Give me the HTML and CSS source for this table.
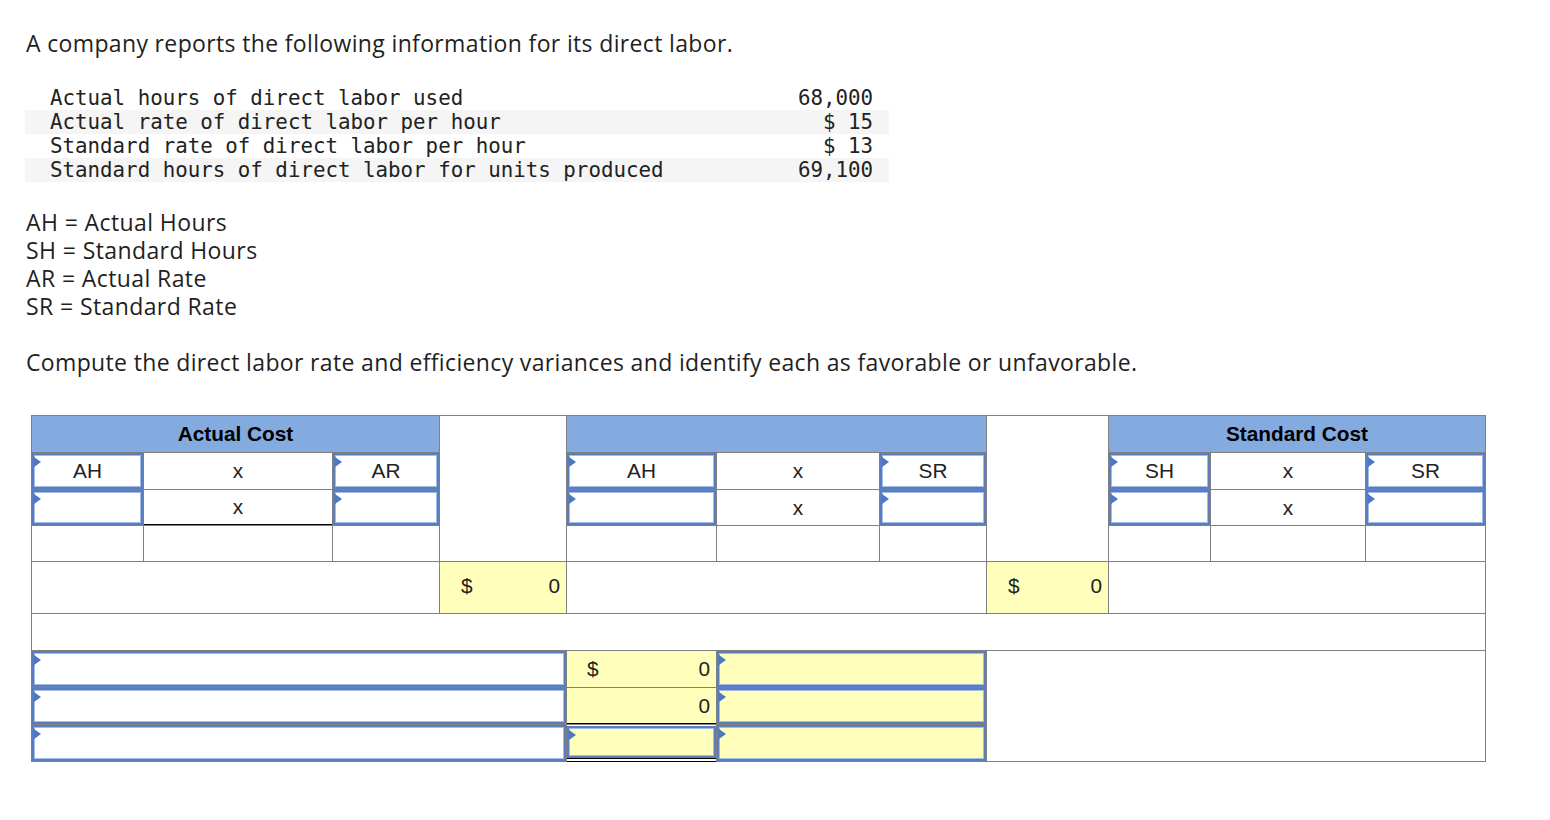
FILE: index.html
```html
<!DOCTYPE html>
<html>
<head>
<meta charset="utf-8">
<link rel="stylesheet" href="styles.css">
</head>
<body>
<div class="page">
  <p class="intro">A company reports the following information for its direct labor.</p>
  <table class="data">
    <tr><td class="lbl">Actual hours of direct labor used</td><td class="val">68,000</td></tr>
    <tr class="alt"><td class="lbl">Actual rate of direct labor per hour</td><td class="val">$ 15</td></tr>
    <tr><td class="lbl">Standard rate of direct labor per hour</td><td class="val">$ 13</td></tr>
    <tr class="alt"><td class="lbl">Standard hours of direct labor for units produced</td><td class="val">69,100</td></tr>
  </table>
  <div class="defs">
    <div>AH = Actual Hours</div>
    <div>SH = Standard Hours</div>
    <div>AR = Actual Rate</div>
    <div>SR = Standard Rate</div>
  </div>
  <p class="task">Compute the direct labor rate and efficiency variances and identify each as favorable or unfavorable.</p>

  <div class="sheet">
    <!-- row 1 -->
    <div class="cell hdr c1-4 r1">Actual Cost</div>
    <div class="cell c4 r1-5"></div>
    <div class="cell hdr c5-8 r1"></div>
    <div class="cell c8 r1-5"></div>
    <div class="cell hdr c9-12 r1">Standard Cost</div>
    <!-- row 2 -->
    <div class="cell inp c1 r2"><span class="tri"></span>AH</div>
    <div class="cell txt c2 r2">x</div>
    <div class="cell inp c3 r2"><span class="tri"></span>AR</div>
    <div class="cell inp c5 r2"><span class="tri"></span>AH</div>
    <div class="cell txt c6 r2">x</div>
    <div class="cell inp c7 r2"><span class="tri"></span>SR</div>
    <div class="cell inp c9 r2"><span class="tri"></span>SH</div>
    <div class="cell txt c10 r2">x</div>
    <div class="cell inp c11 r2"><span class="tri"></span>SR</div>
    <!-- row 3 -->
    <div class="cell inp c1 r3"><span class="tri"></span></div>
    <div class="cell txt c2 r3 uline">x</div>
    <div class="cell inp c3 r3"><span class="tri"></span></div>
    <div class="cell inp c5 r3"><span class="tri"></span></div>
    <div class="cell txt c6 r3">x</div>
    <div class="cell inp c7 r3"><span class="tri"></span></div>
    <div class="cell inp c9 r3"><span class="tri"></span></div>
    <div class="cell txt c10 r3">x</div>
    <div class="cell inp c11 r3"><span class="tri"></span></div>
    <!-- row 4 -->
    <div class="cell c1 r4"></div>
    <div class="cell c2 r4"></div>
    <div class="cell c3 r4"></div>
    <div class="cell c5 r4"></div>
    <div class="cell c6 r4"></div>
    <div class="cell c7 r4"></div>
    <div class="cell c9 r4"></div>
    <div class="cell c10 r4"></div>
    <div class="cell c11 r4"></div>
    <!-- row 5 -->
    <div class="cell c1-4 r5"></div>
    <div class="cell money tall c4 r5"><span>$</span><span>0</span></div>
    <div class="cell c5-8 r5"></div>
    <div class="cell money tall c8 r5"><span>$</span><span>0</span></div>
    <div class="cell c9-12 r5"></div>
    <!-- row 6 -->
    <div class="cell c1-12 r6"></div>
    <!-- rows 7-9 -->
    <div class="cell inp c1-5 r7"><span class="tri"></span></div>
    <div class="cell money sm c5 r7"><span>$</span><span>0</span></div>
    <div class="cell inp yel c6-8 r7"><span class="tri"></span></div>
    <div class="cell c8-12 r7-10"></div>

    <div class="cell inp c1-5 r8"><span class="tri"></span></div>
    <div class="cell money sm c5 r8 uline"><span></span><span>0</span></div>
    <div class="cell inp yel c6-8 r8"><span class="tri"></span></div>

    <div class="cell inp c1-5 r9"><span class="tri"></span></div>
    <div class="cell dbl c5 r9"><div class="inp yel box"><span class="tri"></span></div></div>
    <div class="cell inp yel c6-8 r9"><span class="tri"></span></div>
  </div>
</div>
</body>
</html>
```

FILE: styles.css
```css
html, body {
  margin: 0;
  padding: 0;
  background: #ffffff;
}

.page {
  padding: 29px 0 40px 25px;
  font-family: "Open Sans", "Noto Sans", sans-serif;
  color: #1f1f1f;
}

.intro, .task {
  margin: 0;
  font-size: 23px;
  letter-spacing: 0.35px;
  line-height: 28px;
  padding-left: 1px;
}

.data {
  margin-top: 29px;
  border-collapse: collapse;
  width: 864px;
  font-family: "DejaVu Sans Mono", monospace;
  font-size: 20.8px;
  letter-spacing: 0;
  color: #222;
}

.data td {
  height: 24px;
  padding: 0;
  line-height: 24px;
  white-space: pre;
}

.data .lbl {
  padding-left: 25px;
}

.data .val {
  text-align: right;
  padding-right: 16px;
}

.data .alt td {
  background: #f5f5f5;
}

.defs {
  margin-top: 26px;
  font-size: 23px;
  letter-spacing: 0.4px;
  line-height: 28px;
  padding-left: 1px;
}

.task {
  margin-top: 28px;
}

.sheet {
  margin-top: 39px;
  margin-left: 6px;
  display: grid;
  grid-template-columns: 111px 188px 106px 126px 149px 162px 106px 121px 101px 154px 119px;
  grid-template-rows: 36px 36px 35px 35px 51px 36px 36px 36px 36px;
  gap: 1px;
  padding: 1px;
  background: #808080;
  width: max-content;
  font-family: "Liberation Sans", Arial, sans-serif;
  font-size: 20.8px;
  color: #222;
}

.cell {
  background: #ffffff;
  position: relative;
  box-sizing: border-box;
}

.hdr {
  background: #84abdf;
  color: #000;
  font-weight: bold;
  display: flex;
  align-items: center;
  justify-content: center;
}

.txt {
  display: flex;
  align-items: center;
  justify-content: center;
}

.inp {
  border: 2px solid #5a7dbd;
  box-shadow: inset 0 0 0 1px #a4bce4;
  display: flex;
  align-items: center;
  justify-content: center;
}

.yel {
  background: #ffffbb;
}

.tri {
  position: absolute;
  left: 0;
  top: 2px;
  width: 0;
  height: 0;
  border-top: 5px solid transparent;
  border-bottom: 5px solid transparent;
  border-left: 7px solid #4a78c4;
}

.money {
  background: #ffffbb;
  display: flex;
  align-items: center;
  justify-content: space-between;
  padding: 0 6px 0 21px;
}

.money.tall {
  padding-bottom: 3px;
}

.money.sm {
  padding: 0 6px 0 20px;
}

.uline {
  border-bottom: 1px solid #000;
}

.dbl {
  background: #ffffff;
  padding: 1px 0 0 0;
  display: flex;
  flex-direction: column;
}

.dbl .box {
  height: 32px;
  box-sizing: border-box;
  position: relative;
}

.dbl::after {
  content: "";
  position: absolute;
  left: 0;
  right: 0;
  bottom: -1px;
  height: 4px;
  border-top: 1px solid #000;
  border-bottom: 1px solid #000;
  box-sizing: border-box;
}

/* grid placement */
.c1 { grid-column: 1; }
.c2 { grid-column: 2; }
.c3 { grid-column: 3; }
.c4 { grid-column: 4; }
.c5 { grid-column: 5; }
.c6 { grid-column: 6; }
.c7 { grid-column: 7; }
.c8 { grid-column: 8; }
.c9 { grid-column: 9; }
.c10 { grid-column: 10; }
.c11 { grid-column: 11; }
.c1-4 { grid-column: 1 / 4; }
.c5-8 { grid-column: 5 / 8; }
.c9-12 { grid-column: 9 / 12; }
.c1-12 { grid-column: 1 / 12; }
.c1-5 { grid-column: 1 / 5; }
.c6-8 { grid-column: 6 / 8; }
.c8-12 { grid-column: 8 / 12; }

.r1 { grid-row: 1; }
.r2 { grid-row: 2; }
.r3 { grid-row: 3; }
.r4 { grid-row: 4; }
.r5 { grid-row: 5; }
.r6 { grid-row: 6; }
.r7 { grid-row: 7; }
.r8 { grid-row: 8; }
.r9 { grid-row: 9; }
.r1-5 { grid-row: 1 / 5; }
.r7-10 { grid-row: 7 / 10; }
```
